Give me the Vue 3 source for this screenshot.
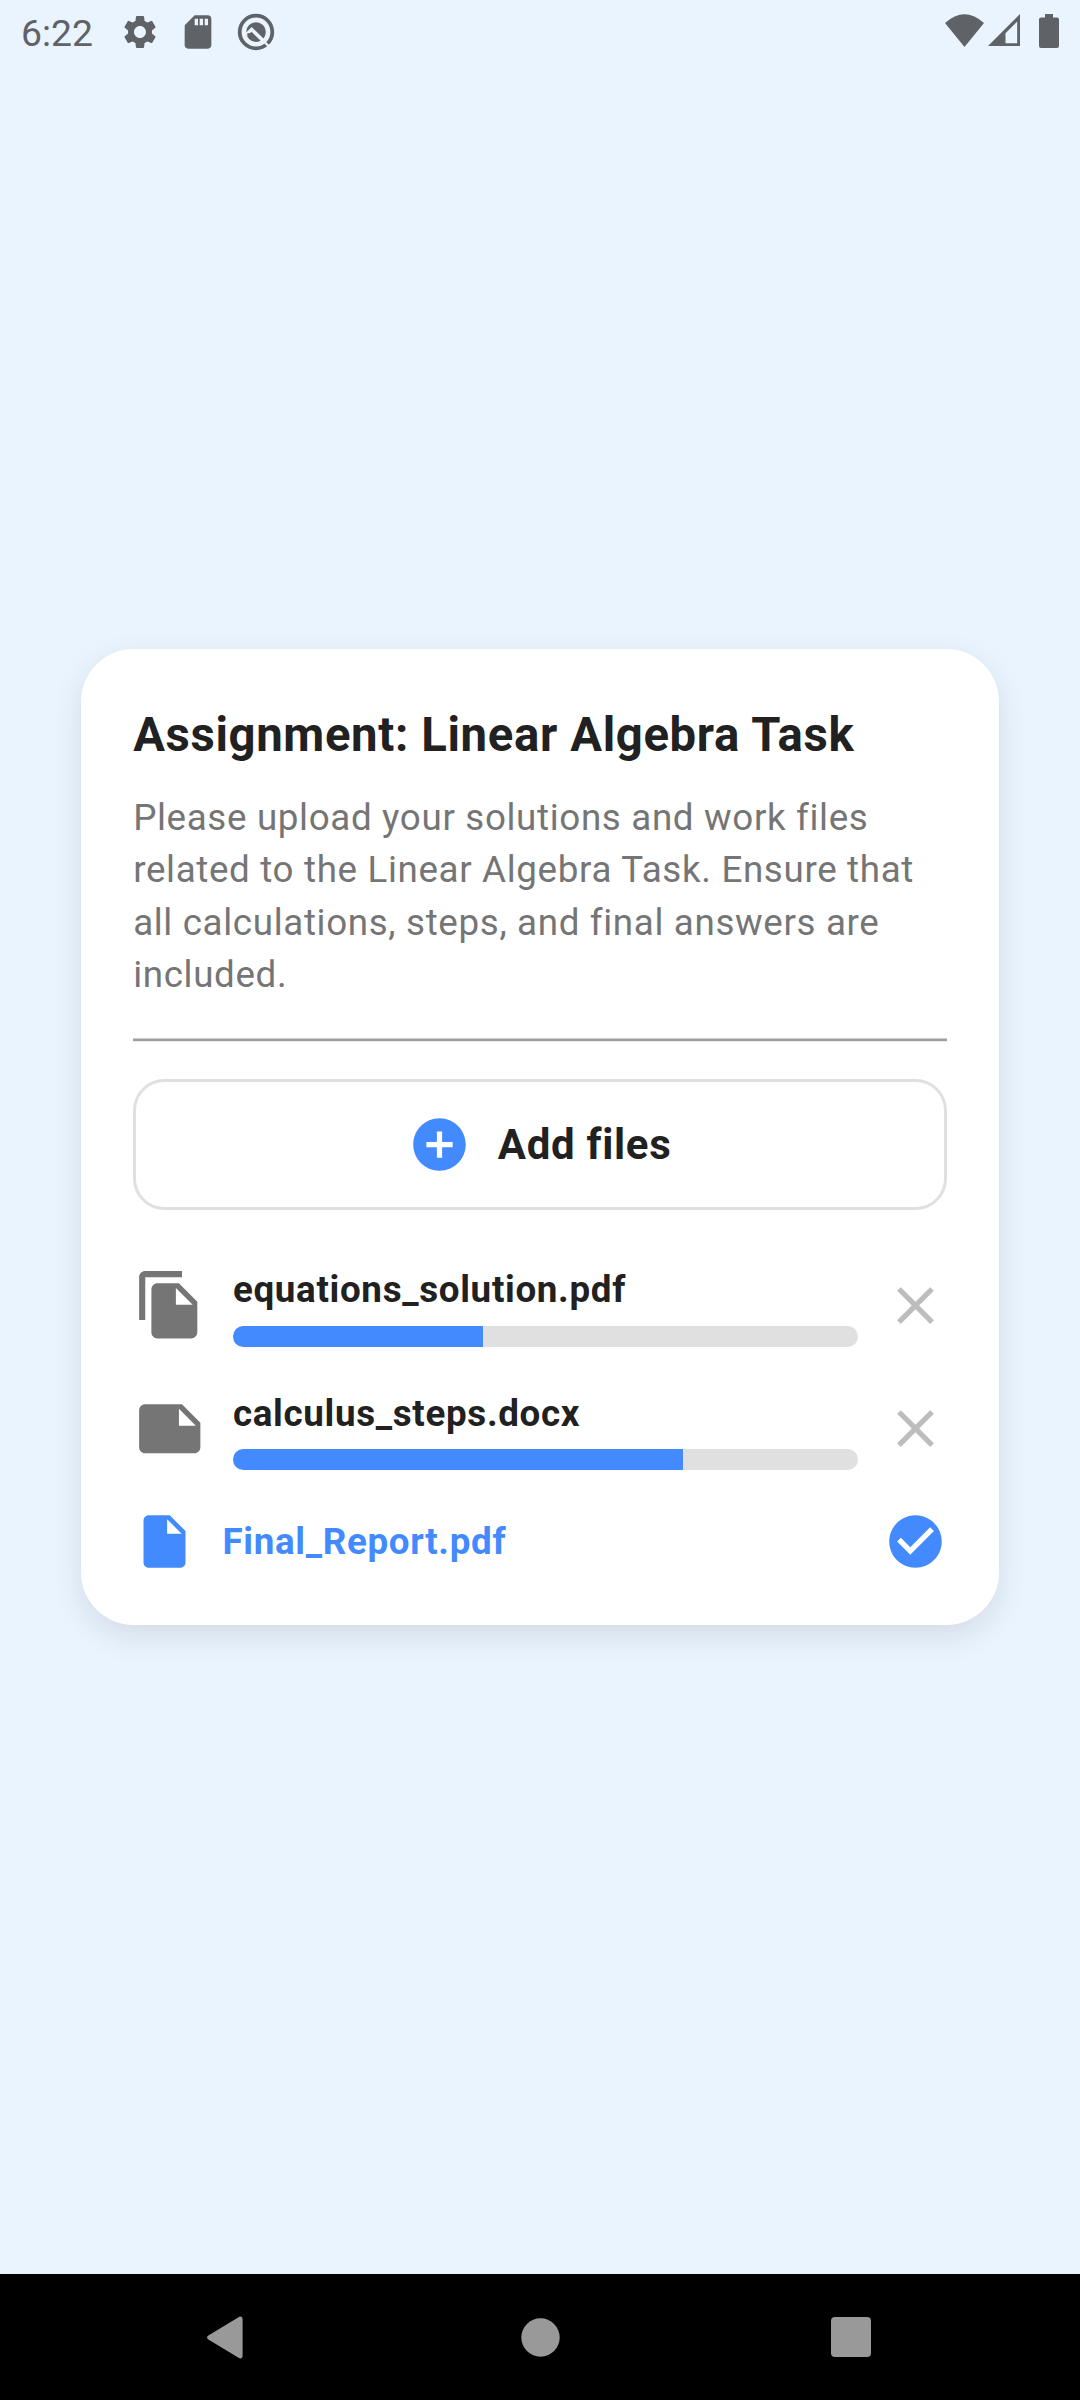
<script setup>
const uploads = [
  {
    name: 'equations_solution.pdf',
    progress: 40,
    icon: 'M16 1H4c-1.1 0-2 .9-2 2v14h2V3h12V1zm-1 4l6 6v10c0 1.1-.9 2-2 2H7.99C6.89 23 6 22.1 6 21l.01-14c0-1.1.89-2 1.99-2h7zm-1 7h5.5L14 6.5V12z'
  },
  {
    name: 'calculus_steps.docx',
    progress: 72,
    icon: 'M22 10l-6-6H4c-1.1 0-2 .9-2 2v12.01c0 1.1.9 1.99 2 1.99l16-.01c1.1 0 2-.89 2-1.99v-8zm-7-4.5l5.5 5.5H15V5.5z'
  }
]
</script>

<template>
  <div class="screen">
    <header class="status">
      <div class="status-left">
        <span class="clock">6:22</span>
        <svg class="status-icon gear" viewBox="0 0 24 24">
          <path d="M19.14 12.94c.04-.3.06-.61.06-.94 0-.32-.02-.64-.07-.94l2.03-1.58c.18-.14.23-.41.12-.61l-1.92-3.32c-.12-.22-.37-.29-.59-.22l-2.39.96c-.5-.38-1.03-.7-1.62-.94L14.4 2.81c-.04-.24-.24-.41-.48-.41h-3.84c-.24 0-.43.17-.47.41l-.36 2.54c-.59.24-1.13.57-1.62.94l-2.39-.96c-.22-.08-.47 0-.59.22L2.74 8.87c-.12.21-.08.47.12.61l2.03 1.58c-.05.3-.09.63-.09.94s.02.64.07.94l-2.03 1.58c-.18.14-.23.41-.12.61l1.92 3.32c.12.22.37.29.59.22l2.39-.96c.5.38 1.03.7 1.62.94l.36 2.54c.05.24.24.41.48.41h3.84c.24 0 .44-.17.47-.41l.36-2.54c.59-.24 1.13-.56 1.62-.94l2.39.96c.22.08.47 0 .59-.22l1.92-3.32c.12-.22.07-.47-.12-.61l-2.01-1.58zM12 15.6c-1.98 0-3.6-1.62-3.6-3.6s1.62-3.6 3.6-3.6 3.6 1.62 3.6 3.6-1.62 3.6-3.6 3.6z" />
        </svg>
        <svg class="status-icon" viewBox="0 0 24 24">
          <path d="M18 2h-8L4.02 8 4 20c0 1.1.9 2 2 2h12c1.1 0 2-.9 2-2V4c0-1.1-.9-2-2-2zm-6 6h-2V4h2v4zm3 0h-2V4h2v4zm3 0h-2V4h2v4z" />
        </svg>
        <svg class="status-icon" viewBox="0 0 40 40">
          <circle cx="20" cy="20" r="16.3" fill="none" stroke="#5f6368" stroke-width="3.8" />
          <circle cx="20" cy="20" r="9.8" />
          <path d="M9 21.5L15.7 15L28.5 27.5L26 30L15.5 19.8L11.5 24Z" fill="#eaf4ff" />
          <path d="M11 21.5L15.2 20.8L23.5 29.2A9.8 9.8 0 0 1 11 21.5Z" />
          <path d="M29 30.5L35 36.5" fill="none" stroke="#eaf4ff" stroke-width="2.4" />
        </svg>
      </div>
      <div class="status-right">
        <svg width="39" height="33" viewBox="0 0 39 33"><path d="M0 9Q19.5-8.6 39 9L19.5 33Z" /></svg>
        <svg width="32" height="32" viewBox="0 0 32 32"><path fill-rule="evenodd" d="M32 0V32H0ZM29.2 7.5L17.5 19.2V29.2H29.2Z" /></svg>
        <svg width="20" height="34" viewBox="0 0 20 34"><path d="M6 0H14V3.4H18Q20 3.4 20 5.4V32Q20 34 18 34H2Q0 34 0 32V5.4Q0 3.4 2 3.4H6Z" /></svg>
      </div>
    </header>

    <main class="stage">
      <section class="card">
        <h1 class="title">Assignment: Linear Algebra Task</h1>
        <p class="description">
          Please upload your solutions and work files related to the Linear Algebra Task. Ensure that all calculations, steps, and final answers are included.
        </p>
        <hr class="divider" />
        <button class="add" type="button">
          <svg class="icon-md blue" viewBox="0 0 24 24">
            <path d="M12 2C6.48 2 2 6.48 2 12s4.48 10 10 10 10-4.48 10-10S17.52 2 12 2zm5 11h-4v4h-2v-4H7v-2h4V7h2v4h4v2z" />
          </svg>
          <span>Add files</span>
        </button>

        <div class="files">
          <div v-for="file in uploads" :key="file.name" class="file">
            <svg class="icon-lg" viewBox="0 0 24 24"><path :d="file.icon" /></svg>
            <div class="file-info">
              <span class="file-name">{{ file.name }}</span>
              <div class="track"><div class="fill" :style="{ width: file.progress + '%' }"></div></div>
            </div>
            <svg class="icon-md close" viewBox="0 0 24 24">
              <path d="M19 6.41L17.59 5 12 10.59 6.41 5 5 6.41 10.59 12 5 17.59 6.41 19 12 13.41 17.59 19 19 17.59 13.41 12z" />
            </svg>
          </div>
          <div class="file done">
            <svg class="icon-md blue" viewBox="0 0 24 24">
              <path d="M6 2c-1.1 0-1.99.9-1.99 2L4 20c0 1.1.89 2 1.99 2H18c1.1 0 2-.9 2-2V8l-6-6H6zm7 7V3.5L18.5 9H13z" />
            </svg>
            <span class="file-name done-name">Final_Report.pdf</span>
            <svg class="icon-md blue" viewBox="0 0 24 24">
              <path d="M12 2C6.48 2 2 6.48 2 12s4.48 10 10 10 10-4.48 10-10S17.52 2 12 2zm-2 15l-5-5 1.41-1.41L10 14.17l7.59-7.59L19 8l-9 9z" />
            </svg>
          </div>
        </div>
      </section>
    </main>

    <nav class="navbar">
      <svg width="38" height="43" viewBox="0 0 38 43"><path d="M34 2.5L2.5 21.5L34 40.5Z" stroke="#999" stroke-width="5" stroke-linejoin="round" transform="translate(1.2 0.6) scale(0.97)" /></svg>
      <svg class="home" width="39" height="39" viewBox="0 0 39 39"><circle cx="19.5" cy="19.5" r="19.2" /></svg>
      <svg width="40" height="40" viewBox="0 0 40 40"><rect width="40" height="40" rx="4" /></svg>
    </nav>
  </div>
</template>

<style>
body {
  background: #eaf4ff;
}
</style>

<style scoped>
.screen {
  display: flex;
  flex-direction: column;
  width: 1080px;
  height: 2400px;
  background: #eaf4ff;
  font-family: Roboto, "Liberation Sans", sans-serif;
}
svg {
  display: block;
  flex: none;
}
.status {
  display: flex;
  justify-content: space-between;
  height: 63px;
  box-sizing: border-box;
  padding: 0 21px;
  fill: #5f6368;
  color: #5f6368;
}
.status-left {
  display: flex;
  align-items: center;
}
.clock {
  width: 99px;
  font-size: 37.3px;
  line-height: 63px;
  padding-top: 3px;
  box-sizing: border-box;
}
.status-icon {
  width: 40px;
  height: 40px;
  margin-right: 18px;
}
.status-right {
  display: flex;
  align-items: flex-start;
  padding-top: 14px;
}
.status-right svg + svg {
  margin-left: 3.5px;
}
.status-right svg + svg + svg {
  margin-left: 19.5px;
}
.stage {
  display: flex;
  flex: 1;
  align-items: center;
  justify-content: center;
  padding-bottom: 63px;
}
.card {
  width: 918.75px;
  box-sizing: border-box;
  padding: 52.5px;
  border-radius: 52.5px;
  background: #fff;
  box-shadow: 0 10.5px 31px rgba(0, 0, 0, 0.1);
}
.title {
  margin: 0;
  padding-top: 1px;
  font-size: 47.25px;
  line-height: 67.6px;
  font-weight: 700;
  letter-spacing: 0.656px;
  color: #212121;
}
.description {
  margin: 22.2px 0 0;
  font-size: 36.75px;
  line-height: 52.5px;
  letter-spacing: 0.656px;
  color: #757575;
}
.divider {
  height: 2px;
  margin: 36.3px 0 37px;
  border: 0;
  border-top: 1px solid #cfcfcf;
  border-bottom: 1px solid #ececec;
  background: #9e9e9e;
}
.add {
  display: flex;
  align-items: center;
  justify-content: center;
  gap: 26.25px;
  width: 100%;
  height: 131px;
  padding: 0;
  border: 3px solid #e0e0e0;
  border-radius: 31.5px;
  background: #fff;
  font: 700 42px/60px Roboto, "Liberation Sans", sans-serif;
  letter-spacing: 0.7px;
  color: #212121;
}
.icon-md {
  width: 63px;
  height: 63px;
}
.icon-lg {
  width: 73.5px;
  height: 73.5px;
  fill: #757575;
}
.blue {
  fill: #448aff;
}
.close {
  fill: #bdbdbd;
}
.files {
  display: flex;
  flex-direction: column;
  gap: 39.4px;
  margin-top: 52.9px;
}
.file {
  display: flex;
  align-items: center;
  gap: 26.25px;
}
.file-info {
  display: flex;
  flex: 1;
  flex-direction: column;
  gap: 9.2px;
}
.file-name {
  padding-top: 1.3px;
  font-size: 36.75px;
  line-height: 52.5px;
  font-weight: 700;
  letter-spacing: 0.68px;
  color: #212121;
}
.done-name {
  flex: 1;
  padding-top: 2.4px;
  color: #448aff;
}
.track {
  height: 21px;
  overflow: hidden;
  border-radius: 10.5px;
  background: #e0e0e0;
}
.fill {
  height: 100%;
  background: #448aff;
}
.navbar {
  display: flex;
  align-items: center;
  justify-content: space-between;
  height: 126px;
  box-sizing: border-box;
  padding: 0 209px 0 206px;
  background: #000;
  fill: #999;
}
.home {
  margin-left: 5px;
}
</style>
